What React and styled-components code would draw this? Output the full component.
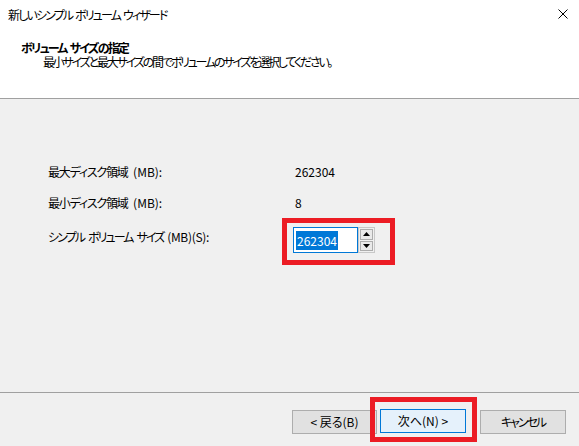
import React from "react";
import styled, { createGlobalStyle } from "styled-components";

const Global = createGlobalStyle`
  html, body { margin: 0; padding: 0; background: #f0f0f0; }
  body { font-family: "Noto Sans CJK JP", "Noto Sans", sans-serif; }
`;

const Dialog = styled.div`
  width: 579px;
  height: 446px;
  display: flex;
  flex-direction: column;
  background: #f0f0f0;
  font-family: "Noto Sans CJK JP", "Noto Sans", sans-serif;
  font-size: 12px;
  font-feature-settings: "palt";
  color: #000;
  overflow: hidden;
`;

const Header = styled.div`
  height: 98px;
  background: #fff;
  border-bottom: 1px solid #a0a0a0;
  display: flex;
  flex-direction: column;
`;

const TitleBar = styled.div`
  height: 30px;
  display: flex;
  align-items: center;
  justify-content: space-between;
  padding: 0 11px 0 8px;
`;

const Text = styled.span`
  line-height: 14px;
  letter-spacing: ${(p) => p.$ls || 0}px;
  word-spacing: ${(p) => p.$ws || 0}px;
  white-space: pre;
`;

const Latin = styled.span`
  letter-spacing: ${(p) => p.$ls || 0}px;
  word-spacing: 0;
`;

const CloseIcon = styled.svg`
  width: 10px;
  height: 10px;
  margin-top: -2px;
`;

const HeadBlock = styled.div`
  padding: 11px 0 0 21px;
  display: flex;
  flex-direction: column;
`;

const Heading = styled.div`
  font-weight: bold;
  line-height: 14px;
  letter-spacing: -1.8px;
  word-spacing: 2px;
  white-space: pre;
`;

const SubText = styled.div`
  line-height: 14px;
  padding-left: 22px;
  letter-spacing: -2.2px;
  white-space: nowrap;
`;

const Content = styled.div`
  flex: 1;
  padding: 66px 0 0 48px;
  display: flex;
  flex-direction: column;
`;

const Row = styled.div`
  display: flex;
  align-items: flex-start;
  margin-top: ${(p) => p.$gap || 0}px;
`;

const Label = styled.div`
  width: 247px;
  line-height: 14px;
  white-space: pre;
  letter-spacing: ${(p) => p.$ls || 0}px;
  word-spacing: ${(p) => p.$ws || 0}px;
  margin-top: ${(p) => p.$offset || 0}px;
`;

const Value = styled.div`
  line-height: 14px;
`;

const Highlight = styled.div`
  border: 5px solid #ec1c24;
  display: flex;
  padding: ${(p) => p.$pad};
  margin-left: ${(p) => p.$ml || 0}px;
  margin-top: ${(p) => p.$mt || 0}px;
`;

const Spin = styled.div`
  display: flex;
  height: 26px;
`;

const SpinInput = styled.div`
  height: 24px;
  width: 61px;
  border: 1px solid #0078d7;
  background: #fff;
  display: flex;
  align-items: center;
  padding-left: 2px;
`;

const Selected = styled.span`
  background: #0078d7;
  color: #fff;
  line-height: 19px;
  padding: 0 1px;
`;

const SpinButtons = styled.div`
  width: 15px;
  height: 24px;
  border: 1px solid #c8c8c8;
  display: flex;
  flex-direction: column;
  background: #f0f0f0;
`;

const SpinBtn = styled.div`
  flex: 1;
  display: flex;
  align-items: center;
  justify-content: center;
  background: #e9e9e9;
  border: 1px solid #adadad;
  margin: 1px;
  & + & { margin-top: 0; }
`;

const Footer = styled.div`
  height: 53px;
  border-top: 1px solid #a0a0a0;
  display: flex;
  justify-content: flex-end;
  align-items: flex-start;
  padding-right: 13px;
`;

const Button = styled.div`
  width: ${(p) => p.$w || 86}px;
  height: 24px;
  box-sizing: border-box;
  border: 1px solid ${(p) => (p.$primary ? "#0078d7" : "#adadad")};
  background: ${(p) => (p.$primary ? "#e5f1fb" : "#e1e1e1")};
  display: flex;
  align-items: center;
  justify-content: center;
  line-height: 14px;
  white-space: pre;
  letter-spacing: ${(p) => p.$ls || 0}px;
  word-spacing: ${(p) => p.$ws || 0}px;
  margin-top: ${(p) => p.$mt || 0}px;
  margin-left: ${(p) => p.$ml || 0}px;
`;

const Up = () => (
  <svg width="7" height="4" viewBox="0 0 7 4">
    <polygon points="3.5,0 7,4 0,4" fill="#000" />
  </svg>
);
const Down = () => (
  <svg width="7" height="4" viewBox="0 0 7 4">
    <polygon points="0,0 7,0 3.5,4" fill="#000" />
  </svg>
);

export default function App() {
  return (
    <>
      <Global />
      <Dialog>
        <Header>
          <TitleBar>
            <Text $ls={-1.85} $ws={2}>新しいシンプル ボリューム ウィザード</Text>
            <CloseIcon viewBox="0 0 10 10">
              <path d="M0.5 0.5 L9.5 9.5 M9.5 0.5 L0.5 9.5" stroke="#000" strokeWidth="1" />
            </CloseIcon>
          </TitleBar>
          <HeadBlock>
            <Heading>ボリューム サイズの指定</Heading>
            <SubText>最小サイズと最大サイズの間でボリュームのサイズを選択してください。</SubText>
          </HeadBlock>
        </Header>
        <Content>
          <Row>
            <Label $ls={-1.2} $ws={4}>最大ディスク領域 <Latin>(MB):</Latin></Label>
            <Value>262304</Value>
          </Row>
          <Row $gap={17}>
            <Label $ls={-1.2} $ws={4}>最小ディスク領域 <Latin>(MB):</Latin></Label>
            <Value>8</Value>
          </Row>
          <Row $gap={8}>
            <Label $ls={-1.9} $ws={3} $offset={12}>
              シンプル ボリューム サイズ <Latin $ls={-0.3}>(MB)(S):</Latin>
            </Label>
            <Highlight $pad="4px 15px 7px 6px" $ml={-13}>
              <Spin>
                <SpinInput>
                  <Selected>262304</Selected>
                </SpinInput>
                <SpinButtons>
                  <SpinBtn><Up /></SpinBtn>
                  <SpinBtn><Down /></SpinBtn>
                </SpinButtons>
              </Spin>
            </Highlight>
          </Row>
        </Content>
        <Footer>
          <Button $w={85} $mt={17}>&lt; 戻る(B)</Button>
          <Highlight $pad="7px 6px 4px 5px" $ml={-7} $mt={4}>
            <Button $primary>次へ(N) &gt;</Button>
          </Highlight>
          <Button $mt={17} $ml={3} $ls={-2}>キャンセル</Button>
        </Footer>
      </Dialog>
    </>
  );
}
